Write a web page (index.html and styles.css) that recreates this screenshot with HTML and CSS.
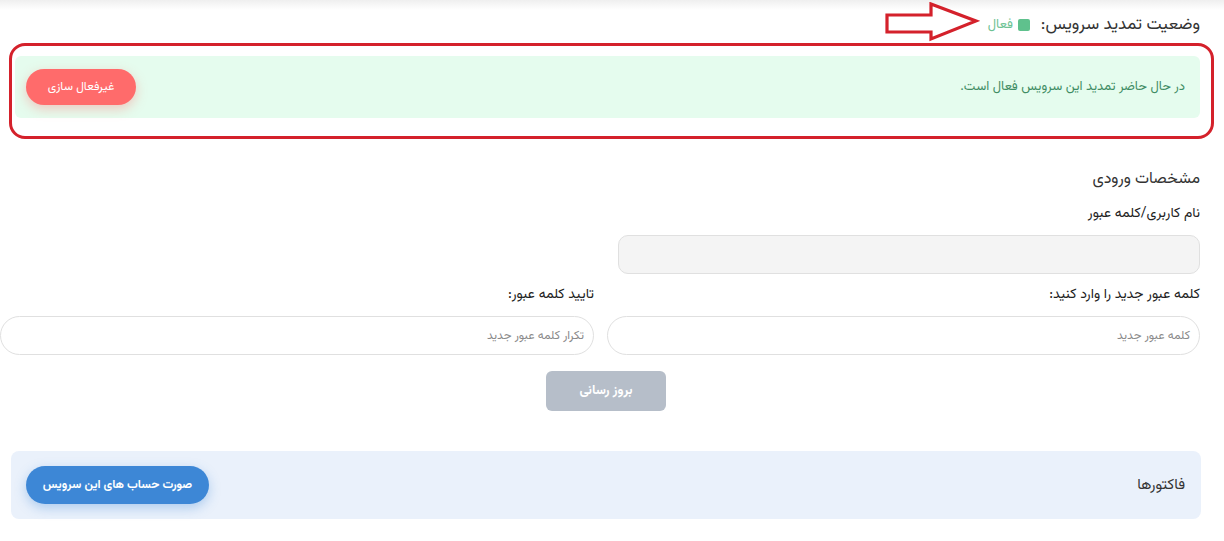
FILE: index.html
```html
<!DOCTYPE html>
<html lang="fa" dir="rtl">
<head>
<meta charset="utf-8">
<link rel="stylesheet" href="styles.css">
</head>
<body>
<div class="topshade"></div>
<div class="page">
  <div class="status-row">
    <span class="status-title">وضعیت تمدید سرویس:</span>
    <span class="status-dot"></span>
    <span class="status-value">فعال</span>
    <svg class="annot-arrow" width="96" height="40" viewBox="0 0 96 40">
      <polygon points="3,13 47,13 47,2 92,19 47,37 47,30 3,30" fill="#fff" stroke="#d4212b" stroke-width="3.2" stroke-linejoin="miter"/>
    </svg>
  </div>

  <div class="alert">
    <span class="alert-text">در حال حاضر تمدید این سرویس فعال است.</span>
    <button class="btn-danger">غیرفعال سازی</button>
  </div>

  <h3 class="section-title">مشخصات ورودی</h3>
  <label class="field-label">نام کاربری/کلمه عبور</label>
  <div class="input input-disabled"></div>

  <div class="pw-grid">
    <div class="pw-col">
      <label class="field-label">کلمه عبور جدید را وارد کنید:</label>
      <div class="input input-pill"><span class="ph">کلمه عبور جدید</span></div>
    </div>
    <div class="pw-col">
      <label class="field-label">تایید کلمه عبور:</label>
      <div class="input input-pill"><span class="ph">تکرار کلمه عبور جدید</span></div>
    </div>
  </div>

  <div class="update-row">
    <button class="btn-update">بروز رسانی</button>
  </div>

  <div class="invoice-card">
    <span class="invoice-title">فاکتورها</span>
    <button class="btn-primary">صورت حساب های این سرویس</button>
  </div>
</div>
</body>
</html>
```

FILE: styles.css
```css
* { box-sizing: border-box; }
html, body { margin: 0; padding: 0; background: #fff; }
body {
  direction: rtl;
  font-family: "Vazirmatn", "Noto Sans Arabic", "Noto Naskh Arabic", "DejaVu Sans", sans-serif;
  color: #333;
  width: 1224px;
  height: 541px;
  overflow: hidden;
}
.topshade {
  height: 10px;
  background: linear-gradient(#efefef, #fff);
}
.page {
  padding-right: 24px;
}
.status-row {
  position: relative;
  height: 30px;
  display: flex;
  align-items: center;
  gap: 5px;
}
.status-title {
  font-size: 17px;
  color: #333;
  margin-left: 6px;
}
.status-dot {
  width: 12px;
  height: 12px;
  border-radius: 2px;
  background: #5fc18d;
}
.status-value {
  font-size: 13px;
  color: #6cc293;
}
.annot-arrow {
  position: absolute;
  left: 884px;
  top: -8px;
}
.alert {
  position: relative;
  margin-top: 16px;
  margin-left: 15px;
  height: 62px;
  background: #e5fcee;
  border-radius: 6px;
  display: flex;
  align-items: center;
  justify-content: space-between;
  padding: 0 15px 0 11px;
}
.alert::before {
  content: "";
  position: absolute;
  left: -6px;
  right: -14px;
  top: -13px;
  bottom: -21px;
  border: 3px solid #d4212b;
  border-radius: 16px;
  pointer-events: none;
}
.alert-text {
  font-size: 13px;
  color: #3f8d64;
}
button {
  font-family: inherit;
  border: 0;
  cursor: pointer;
}
.btn-danger {
  width: 110px;
  height: 36px;
  border-radius: 18px;
  background: #ff6b6b;
  color: #fff;
  font-size: 12px;
  box-shadow: 0 4px 12px rgba(255, 107, 107, 0.35);
}
.section-title {
  margin: 50px 0 0;
  font-size: 16px;
  font-weight: normal;
  line-height: 24px;
  color: #333;
}
.field-label {
  display: block;
  font-size: 14px;
  line-height: 20px;
  color: #222;
}
.section-title + .field-label { margin-top: 12px; }
.input {
  height: 39px;
  border: 1px solid #e0e0e0;
  display: flex;
  align-items: center;
  padding: 0 9px;
}
.input-disabled {
  margin-top: 11px;
  width: 582px;
  background: #f4f4f4;
  border-radius: 10px;
}
.pw-grid {
  margin-top: 11px;
  display: grid;
  grid-template-columns: 593px 594px;
  column-gap: 13px;
}
.input-pill {
  margin-top: 11px;
  border-radius: 20px;
  background: #fff;
}
.ph {
  font-size: 12px;
  color: #8a8a8a;
}
.update-row {
  margin-top: 16px;
  display: flex;
  justify-content: center;
  padding-left: 12px;
}
.btn-update {
  width: 120px;
  height: 40px;
  border-radius: 6px;
  background: #b6bec9;
  color: #fff;
  font-size: 13px;
  font-weight: bold;
}
.invoice-card {
  margin-top: 40px;
  margin-left: 11px;
  margin-right: -1px;
  height: 68px;
  background: #eaf1fb;
  border-radius: 8px;
  display: flex;
  align-items: center;
  justify-content: space-between;
  padding: 0 16px 0 15px;
}
.invoice-title {
  font-size: 15px;
  color: #333;
}
.btn-primary {
  width: 183px;
  height: 38px;
  border-radius: 19px;
  background: #3d87d6;
  color: #fff;
  font-size: 12px;
  font-weight: bold;
  box-shadow: 0 4px 12px rgba(61, 135, 214, 0.35);
}
```
